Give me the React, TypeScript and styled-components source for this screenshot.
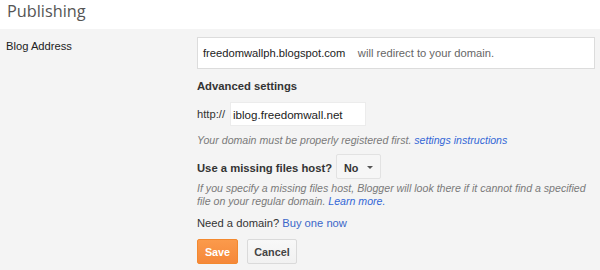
import React from "react";
import styled, { createGlobalStyle } from "styled-components";

const Global = createGlobalStyle`
  html, body { margin: 0; padding: 0; background: #f4f4f4; }
  body { font-family: "Liberation Sans", Arial, sans-serif; }
  * { box-sizing: border-box; }
`;

const Page = styled.div`
  width: 600px;
  height: 270px;
  display: flex;
  flex-direction: column;
  overflow: hidden;
`;

const Header = styled.div`
  height: 29px;
  background: #fff;
  padding: 0 0 0 7px;
  display: flex;
  align-items: flex-start;
`;

const Title = styled.h1`
  margin: 0;
  font-family: "Open Sans", sans-serif;
  font-weight: 400;
  font-size: 16.3px;
  line-height: 22px;
  color: #555;
  padding-top: 0px;
`;

const Panel = styled.div`
  flex: 1;
  background: #f4f4f4;
  display: grid;
  grid-template-columns: 191px 398px;
  padding: 8px 0 0 6px;
  align-items: start;
`;

const Label = styled.div`
  font-size: 11.2px;
  line-height: 14px;
  color: #222;
  padding-top: 2px;
`;

const Content = styled.div`
  display: flex;
  flex-direction: column;
  align-items: flex-start;
`;

const AddressBox = styled.div`
  width: 398px;
  height: 32px;
  background: #fff;
  border: 1px solid #dcdcdc;
  padding: 8px 5px;
  font-size: 11.2px;
  line-height: 14px;
  color: #222;
  white-space: pre;
`;

const Muted = styled.span`
  color: #666;
`;

const Heading = styled.div<{ $mt: number }>`
  margin-top: ${(p) => p.$mt}px;
  font-size: 11.25px;
  line-height: 14px;
  font-weight: 700;
  color: #333;
`;

const Row = styled.div<{ $mt: number; $gap: number }>`
  margin-top: ${(p) => p.$mt}px;
  display: flex;
  align-items: center;
  gap: ${(p) => p.$gap}px;
`;

const Text = styled.span`
  font-size: 11.2px;
  line-height: 14px;
  color: #333;
`;

const TextInput = styled.div`
  width: 136px;
  height: 24px;
  background: #fff;
  border: 1px solid #ececec;
  padding: 1px 2px 0;
  font-size: 11.6px;
  line-height: 22px;
  color: #222;
`;

const Hint = styled.p<{ $mt: number }>`
  margin: ${(p) => p.$mt}px 0 0 0;
  font-size: 10.6px;
  line-height: 13px;
  font-style: italic;
  color: #7a7a7a;
  width: 398px;
`;

const Link = styled.a`
  color: #3367d6;
  text-decoration: none;
`;

const PlainLink = styled.a`
  color: #3b67c9;
  text-decoration: none;
`;

const Select = styled.div`
  width: 45px;
  height: 25px;
  background: #f6f6f6;
  border: 1px solid #e2e2e2;
  border-radius: 2px;
  display: flex;
  align-items: center;
  padding: 2px 0 0 7px;
  gap: 9px;
  font-size: 10.8px;
  font-weight: 700;
  color: #333;
`;

const Caret = styled.span`
  width: 0;
  height: 0;
  border-left: 3px solid transparent;
  border-right: 3px solid transparent;
  border-top: 3px solid #555;
`;

const Para = styled.div<{ $mt: number }>`
  margin-top: ${(p) => p.$mt}px;
  font-size: 11.2px;
  line-height: 14px;
  color: #333;
`;

const Buttons = styled.div`
  margin-top: 9px;
  display: flex;
  gap: 9px;
`;

const Button = styled.button<{ $primary?: boolean }>`
  height: 25px;
  width: ${(p) => (p.$primary ? 41 : 50)}px;
  padding: 0;
  border-radius: 2px;
  font-family: "Liberation Sans", Arial, sans-serif;
  font-size: 10.8px;
  font-weight: 700;
  cursor: pointer;
  border: 1px solid ${(p) => (p.$primary ? "#f3892f" : "#dadada")};
  background: ${(p) =>
    p.$primary
      ? "linear-gradient(#fb9a4b, #f5883a)"
      : "linear-gradient(#f8f8f8, #f1f1f1)"};
  color: ${(p) => (p.$primary ? "#fff" : "#444")};
`;

export default function App() {
  return (
    <Page>
      <Global />
      <Header>
        <Title>Publishing</Title>
      </Header>
      <Panel>
        <Label>Blog Address</Label>
        <Content>
          <AddressBox>
            freedomwallph.blogspot.com{"    "}
            <Muted>will redirect to your domain.</Muted>
          </AddressBox>
          <Heading $mt={10}>Advanced settings</Heading>
          <Row $mt={9} $gap={5}>
            <Text>http://</Text>
            <TextInput>iblog.freedomwall.net</TextInput>
          </Row>
          <Hint $mt={8}>
            Your domain must be properly registered first.{" "}
            <Link href="#">settings instructions</Link>
          </Hint>
          <Row $mt={7} $gap={4}>
            <Heading $mt={2}>Use a missing files host?</Heading>
            <Select>
              No <Caret />
            </Select>
          </Row>
          <Hint $mt={3}>
            If you specify a missing files host, Blogger will look there if it
            cannot find a specified file on your regular domain.{" "}
            <Link href="#">Learn more.</Link>
          </Hint>
          <Para $mt={8}>
            Need a domain? <PlainLink href="#">Buy one now</PlainLink>
          </Para>
          <Buttons>
            <Button $primary>Save</Button>
            <Button>Cancel</Button>
          </Buttons>
        </Content>
      </Panel>
    </Page>
  );
}
